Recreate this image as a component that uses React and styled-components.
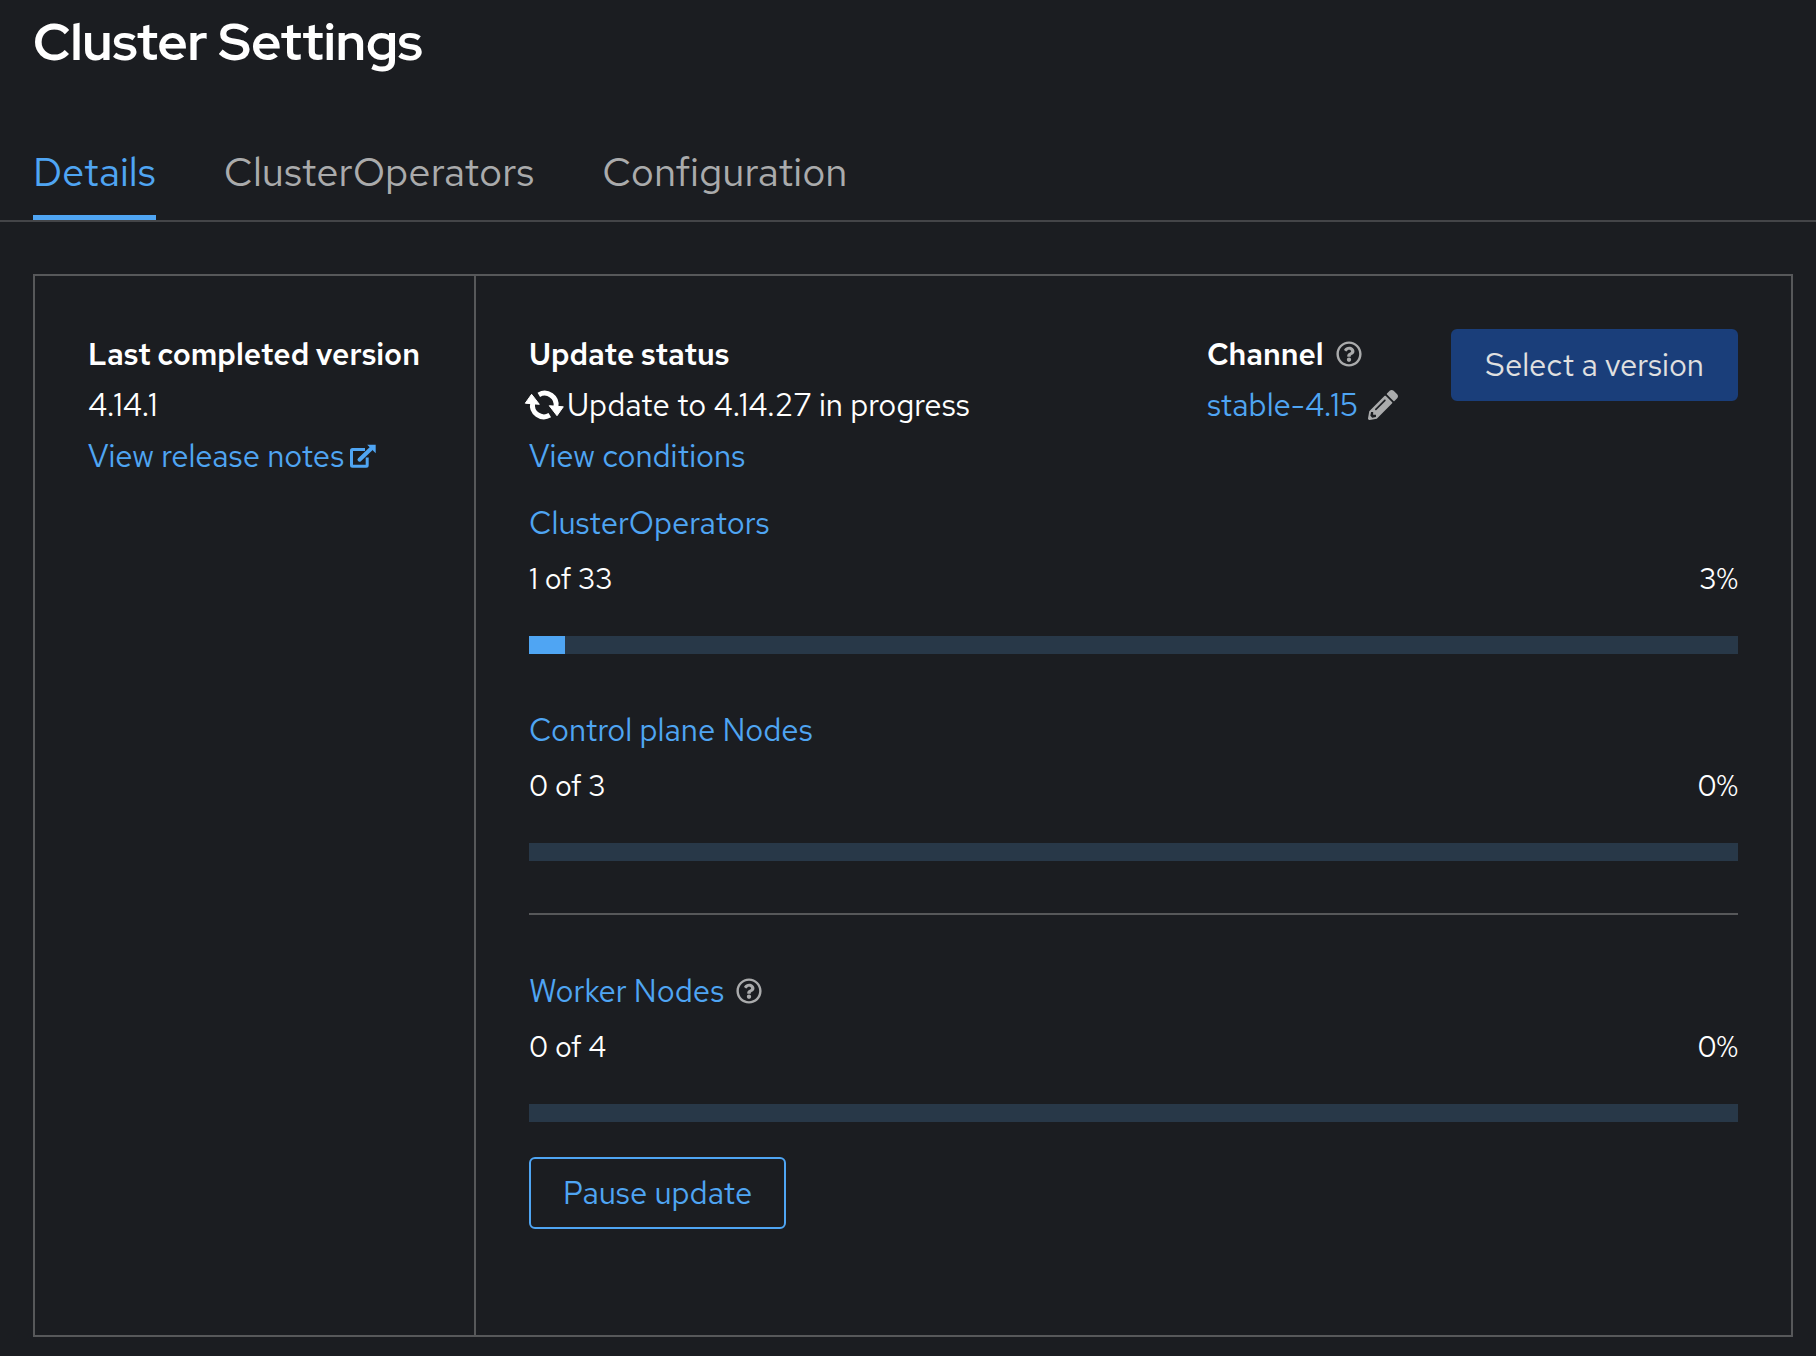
import React from 'react';
import styled, { createGlobalStyle } from 'styled-components';
import { FaPencilAlt, FaRegQuestionCircle } from 'react-icons/fa';

const color = {
  page: '#1b1d21',
  text: '#ffffff',
  muted: '#aaabac',
  link: '#4fa5f3',
  rule: '#444548',
  border: '#57585a',
  track: '#283848',
  primary: '#1a3e7a',
  onPrimary: '#e0e0e0',
};

const GlobalStyle = createGlobalStyle`
  * {
    box-sizing: border-box;
  }
  body {
    margin: 0;
    background: ${color.page};
    color: ${color.text};
    font-family: 'Red Hat Text', Lato, sans-serif;
    font-size: 31px;
    line-height: 48px;
  }
  button {
    margin: 0;
    font: inherit;
    cursor: pointer;
  }
`;

const Page = styled.main`
  padding: 9px 0 19px;
`;

const Title = styled.h1`
  margin: 0 0 45px;
  padding: 0 33px;
  font-family: 'Red Hat Display', 'Red Hat Text', Lato, sans-serif;
  font-size: 52px;
  font-weight: 700;
  line-height: 66px;
`;

const Tabs = styled.nav`
  display: flex;
  gap: 68px;
  padding: 0 33px;
  border-bottom: 2px solid ${color.rule};
`;

const Tab = styled.button`
  padding: 22px 0 13px;
  border: 0;
  border-bottom: 5px solid ${(p) => (p.$active ? color.link : 'transparent')};
  background: none;
  color: ${(p) => (p.$active ? color.link : color.muted)};
  font-size: 40px;
  line-height: 60px;
`;

const Card = styled.section`
  display: flex;
  margin: 52px 23px 0 33px;
  border: 2px solid ${color.border};
`;

const VersionColumn = styled.div`
  flex: 0 0 441px;
  padding: 53px;
  border-right: 2px solid ${color.border};
`;

const UpdateColumn = styled.div`
  flex: 1;
  min-width: 0;
  padding: 53px 53px 106px;
`;

const Header = styled.div`
  display: flex;
  align-items: flex-start;
  gap: 53px;
`;

const Facts = styled.dl`
  display: flex;
  flex-direction: column;
  gap: 3px;
  margin: 0;
  padding-top: 1px;
  flex: ${(p) => (p.$grow ? '1' : 'none')};
`;

const Term = styled.dt`
  display: flex;
  align-items: center;
  gap: 12px;
  font-size: 30px;
  font-weight: 600;
  white-space: nowrap;
`;

const Value = styled.dd`
  display: flex;
  align-items: center;
  gap: ${(p) => (p.$wide ? 10 : 4)}px;
  margin: 0;
  white-space: nowrap;
`;

const Link = styled.a`
  display: inline-flex;
  align-items: center;
  gap: 5px;
  color: ${color.link};
  text-decoration: none;
`;

const IconButton = styled.button`
  display: inline-flex;
  padding: 0;
  border: 0;
  background: none;
  color: ${color.muted};
  font-size: ${(p) => p.$size}px;
`;

const Button = styled.button`
  padding: 10px 32px;
  border: 2px solid ${(p) => (p.$primary ? color.primary : color.link)};
  border-radius: 6px;
  background: ${(p) => (p.$primary ? color.primary : 'transparent')};
  color: ${(p) => (p.$primary ? color.onPrimary : color.link)};
  white-space: nowrap;
`;

const SyncSvg = styled.svg`
  margin-left: -3px;
  overflow: visible;
`;

const Group = styled.div`
  margin-top: ${(p) => (p.$first ? 19 : 52)}px;
`;

const GroupTitle = styled.div`
  display: flex;
  align-items: center;
  gap: 12px;
`;

const Counts = styled.div`
  display: flex;
  justify-content: space-between;
  margin: 10px 0 35px;
  font-size: 29px;
  line-height: 44px;
`;

const Track = styled.div`
  height: 18px;
  background: ${color.track};
`;

const Bar = styled.div`
  height: 100%;
  background: ${color.link};
`;

const Divider = styled.hr`
  height: 2px;
  margin: 52px 0 0;
  border: 0;
  background: ${color.border};
`;

const Actions = styled.div`
  display: flex;
  margin-top: 35px;
`;

function SyncIcon() {
  return (
    <SyncSvg width="37" height="30" viewBox="0 0 37 30" aria-hidden="true">
      <g fill="none" stroke="currentColor" strokeWidth="5">
        <path d="M12.8 4.8A11.5 11.5 0 0 1 29.9 17" />
        <path d="M23.8 25.2A11.5 11.5 0 0 1 6.7 13" />
      </g>
      <path
        d="M23.3 15.7L37.3 16.8L31 25.7ZM13.3 14.3L-.7 13.2L5.6 4.3Z"
        fill="currentColor"
        stroke="currentColor"
        strokeWidth="1"
        strokeLinejoin="round"
      />
    </SyncSvg>
  );
}

function ExternalIcon() {
  return (
    <svg width="27" height="28" viewBox="0 -2 27 28" aria-hidden="true">
      <path
        d="M16 5.5H3.5Q2.5 5.5 2.5 6.5V21.2Q2.5 22.2 3.5 22.2H17.2Q18.2 22.2 18.2 21.2V13.5"
        fill="none"
        stroke="currentColor"
        strokeWidth="3"
      />
      <path d="M10.5 15.7L22 4.7" fill="none" stroke="currentColor" strokeWidth="4" strokeLinecap="round" />
      <path d="M18.2 .7H26.7V9.2Z" fill="currentColor" />
    </svg>
  );
}

function Help({ label }) {
  return (
    <IconButton type="button" $size={26} aria-label={label}>
      <FaRegQuestionCircle />
    </IconButton>
  );
}

function Progress({ name, done, total, first, help }) {
  const percent = Math.round((done / total) * 100);
  return (
    <Group $first={first}>
      <GroupTitle>
        <Link href="#">{name}</Link>
        {help && <Help label={help} />}
      </GroupTitle>
      <Counts>
        <span>{`${done} of ${total}`}</span>
        <span>{`${percent}%`}</span>
      </Counts>
      <Track role="progressbar" aria-label={name} aria-valuenow={percent} aria-valuemin={0} aria-valuemax={100}>
        <Bar style={{ width: `${percent}%` }} />
      </Track>
    </Group>
  );
}

export default function App() {
  return (
    <>
      <GlobalStyle />
      <Page>
        <Title>Cluster Settings</Title>
        <Tabs>
          <Tab type="button" $active>Details</Tab>
          <Tab type="button">ClusterOperators</Tab>
          <Tab type="button">Configuration</Tab>
        </Tabs>
        <Card>
          <VersionColumn>
            <Facts>
              <Term>Last completed version</Term>
              <Value>4.14.1</Value>
              <Value>
                <Link href="#">
                  View release notes
                  <ExternalIcon />
                </Link>
              </Value>
            </Facts>
          </VersionColumn>
          <UpdateColumn>
            <Header>
              <Facts $grow>
                <Term>Update status</Term>
                <Value>
                  <SyncIcon />
                  Update to 4.14.27 in progress
                </Value>
                <Value>
                  <Link href="#">View conditions</Link>
                </Value>
              </Facts>
              <Facts>
                <Term>
                  Channel
                  <Help label="About channels" />
                </Term>
                <Value $wide>
                  <Link href="#">stable-4.15</Link>
                  <IconButton type="button" $size={30} aria-label="Edit channel">
                    <FaPencilAlt />
                  </IconButton>
                </Value>
              </Facts>
              <Button type="button" $primary>Select a version</Button>
            </Header>
            <Progress name="ClusterOperators" done={1} total={33} first />
            <Progress name="Control plane Nodes" done={0} total={3} />
            <Divider />
            <Progress name="Worker Nodes" done={0} total={4} help="About worker nodes" />
            <Actions>
              <Button type="button">Pause update</Button>
            </Actions>
          </UpdateColumn>
        </Card>
      </Page>
    </>
  );
}
